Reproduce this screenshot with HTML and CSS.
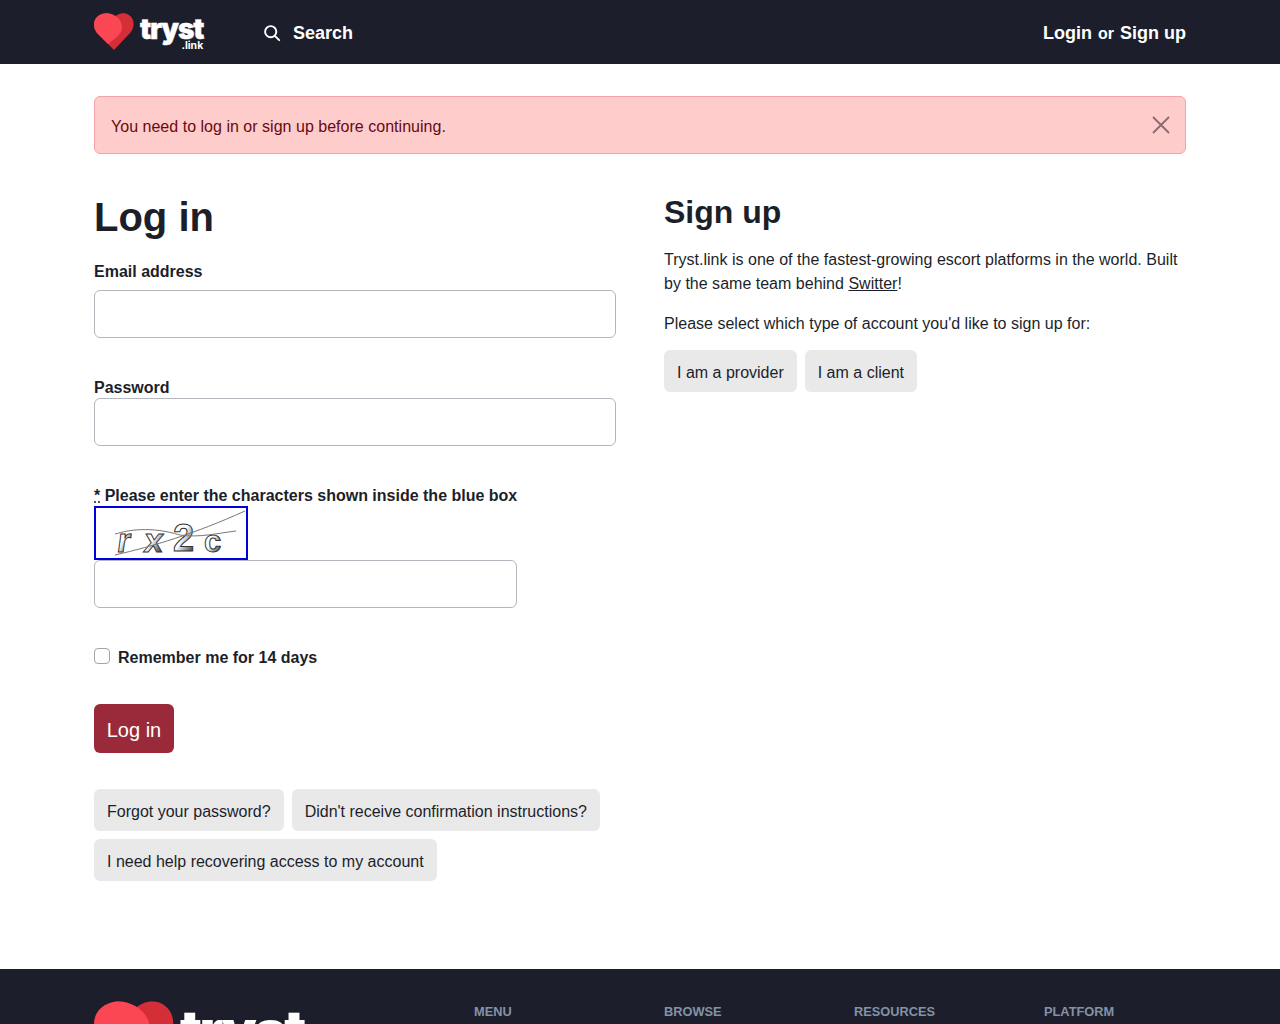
FILE: index.html
```html
<!DOCTYPE html>
<html lang="en">
<head>
<meta charset="utf-8">
<title>Log in - Tryst.link</title>
<link rel="stylesheet" href="styles.css">
</head>
<body>
<header class="topbar">
  <div class="wrap topbar-inner">
    <a class="logo" href="#">
      <svg class="logo-heart" viewBox="0 0 40 38" width="40" height="38" aria-hidden="true">
        <path fill="#d42f38" d="M20 37 L3 20 C-2 14 -1 4 8 1 C13 -1 18 1 20.500 4 C24 0 31 -1 35 2 C41 6 41 15 36 20 Z"/>
        <path fill="#fb4654" d="M14 31 L3 20 C-2 14 -1 4 8 1 C17 -2 28 5 28 14 C28 21 22 25 14 31 Z"/>
      </svg>
      <span class="logo-text">tryst<small>.link</small></span>
    </a>
    <a class="search" href="#">
      <svg viewBox="0 0 18 18" width="18" height="18" aria-hidden="true"><circle cx="7.700" cy="7.700" r="5.600" fill="none" stroke="#fff" stroke-width="1.900"/><path d="M11.800 11.800 L16.200 16.200" stroke="#fff" stroke-width="1.900" stroke-linecap="round"/></svg>
      <span>Search</span>
    </a>
    <div class="auth"><a href="#">Login</a> <span>or</span> <a href="#">Sign up</a></div>
  </div>
</header>

<main class="wrap">
  <div class="alert">
    <span>You need to log in or sign up before continuing.</span>
    <svg viewBox="0 0 18 18" width="18" height="18" aria-hidden="true"><path d="M1 1 L17 17 M17 1 L1 17" stroke="#8a6a6c" stroke-width="1.800"/></svg>
  </div>

  <div class="columns">
    <section class="login">
      <h1>Log in</h1>
      <label class="label first" for="email">Email address</label>
      <input class="field" id="email" type="text">
      <label class="label pw" for="password">Password</label>
      <input class="field" id="password" type="password">
      <label class="label pw" for="captcha"><abbr>*</abbr> Please enter the characters shown inside the blue box</label>
      <div class="captcha">
        <svg viewBox="0 0 154 54" width="154" height="54" aria-hidden="true">
          <defs>
            <linearGradient id="capfill" x1="0" y1="0" x2="1" y2="1">
              <stop offset="0.450" stop-color="#ffffff"/>
              <stop offset="0.950" stop-color="#222222"/>
            </linearGradient>
          </defs>
          <rect x="1" y="1" width="152" height="52" fill="#fff" stroke="#0000d8" stroke-width="2"/>
          <text class="cap" transform="translate(22 46) skewX(-8)">r</text>
          <text class="cap" transform="translate(49 46) skewX(-8)">x</text>
          <text class="cap big" transform="translate(79 45)">2</text>
          <text class="cap small" transform="translate(110 46)">c</text>
          <path d="M21 28 C35 24 56 20 86 29 C105 32 125 27 142 25 M21 49 C60 40 100 28 151 5" fill="none" stroke="#777" stroke-width="1"/>
        </svg>
      </div>
      <input class="field short" id="captcha" type="text">
      <label class="remember"><input type="checkbox"><span>Remember me for 14 days</span></label>
      <button class="submit" type="button">Log in</button>
      <div class="links">
        <a class="btn" href="#">Forgot your password?</a>
        <a class="btn" href="#">Didn't receive confirmation instructions?</a>
        <a class="btn" href="#">I need help recovering access to my account</a>
      </div>
    </section>

    <section class="signup">
      <h2>Sign up</h2>
      <p>Tryst.link is one of the fastest-growing escort platforms in the world. Built by the same team behind <a href="#">Switter</a>!</p>
      <p>Please select which type of account you'd like to sign up for:</p>
      <div class="choices">
        <a class="btn" href="#">I am a provider</a>
        <a class="btn" href="#">I am a client</a>
      </div>
    </section>
  </div>
</main>

<footer class="footer">
  <div class="wrap footer-inner">
    <div class="foot-logo">
      <svg viewBox="0 0 40 38" width="80" height="76" aria-hidden="true">
        <path fill="#d42f38" d="M20 37 L3 20 C-2 14 -1 4 8 1 C13 -1 18 1 20.500 4 C24 0 31 -1 35 2 C41 6 41 15 36 20 Z"/>
        <path fill="#fb4654" d="M14 31 L3 20 C-2 14 -1 4 8 1 C17 -2 28 5 28 14 C28 21 22 25 14 31 Z"/>
      </svg>
      <span>tryst</span>
    </div>
    <div class="foot-cols">
      <h6>MENU</h6><h6>BROWSE</h6><h6>RESOURCES</h6><h6>PLATFORM</h6>
    </div>
  </div>
</footer>
</body>
</html>
```

FILE: styles.css
```css
* { box-sizing: border-box; }
html, body { margin: 0; height: 1024px; overflow: hidden; }
body {
  display: flex;
  flex-direction: column;
  font-family: "Liberation Sans", Arial, sans-serif;
  font-size: 16px;
  line-height: 24px;
  color: #1c1f2a;
  background: #fff;
}
a { color: inherit; text-decoration: none; }
.wrap { width: 1092px; margin: 0 auto; }

.topbar { flex: none; height: 64px; background: #1c1f2b; color: #fff; }
.topbar-inner { display: flex; align-items: center; height: 64px; }
.logo { display: flex; align-items: flex-start; width: 169px; height: 64px; }
.logo-heart { margin-top: 13px; }
.logo-text {
  position: relative;
  margin: 9px 0 0 6px;
  font-family: Inter, sans-serif;
  font-weight: 900;
  font-size: 28px;
  line-height: 40px;
  letter-spacing: -1.200px;
  -webkit-text-stroke: 0.400px #fff;
}
.logo-text small {
  position: absolute;
  right: 0;
  top: 31px;
  font-size: 10.500px;
  line-height: 12px;
  font-weight: 700;
  letter-spacing: 0;
  -webkit-text-stroke: 0;
}
.search { display: flex; align-items: center; gap: 12px; padding-top: 2px; font-size: 18px; font-weight: 700; }
.auth { margin-left: auto; padding-top: 2px; font-size: 18px; font-weight: 700; }
.auth span { font-size: 16px; margin: 0 1px; }

.alert {
  display: flex;
  justify-content: space-between;
  align-items: center;
  height: 58px;
  margin-top: 32px;
  padding: 0 15px 0 16px;
  background: #ffcccc;
  border: 1px solid #f5a3a8;
  border-radius: 6px;
  color: #660a12;
}
.alert span { padding-top: 4px; letter-spacing: 0.020px; }
.columns { display: grid; grid-template-columns: 522px 522px; gap: 48px; margin-top: 39px; }

h1 { margin: 0; font-size: 40px; line-height: 48px; font-weight: 700; }
h2 { margin: 0 0 17px; font-size: 32px; line-height: 38px; font-weight: 700; }
.signup p { margin: 0 0 16px; letter-spacing: 0.012px; }
.signup p a { text-decoration: underline; }

.label { display: block; font-weight: 700; }
.label.first { margin-top: 19px; margin-bottom: 6px; }
.label.pw { margin-top: 38px; margin-bottom: -2px; }
.label abbr { text-decoration: underline dotted; }
.field {
  display: block;
  width: 100%;
  height: 48px;
  padding: 8px 12px;
  border: 1px solid #b4b6bd;
  border-radius: 6px;
  background: #fff;
  font: inherit;
}
.field.short { width: 423px; }
.captcha { position: relative; height: 54px; }
.captcha svg { display: block; }
.cap { font-family: "Liberation Sans", sans-serif; font-size: 34px; font-weight: 700; fill: url(#capfill); stroke: #333; stroke-width: 1; }
.cap.big { font-size: 38px; }
.cap.small { font-size: 31px; }

.remember { display: flex; align-items: center; gap: 8px; margin-top: 38px; font-weight: 700; }
.remember input {
  appearance: none;
  width: 16px;
  height: 16px;
  margin: 0 0 4px;
  border: 1px solid #a3a5ad;
  border-radius: 4px;
  background: #fff;
}
.submit {
  display: block;
  width: 80px;
  height: 49px;
  margin-top: 34px;
  padding: 2px 0 0;
  border: 0;
  border-radius: 6px;
  background: #9a2a3a;
  color: #fff;
  font: inherit;
  font-size: 20px;
}
.links { display: flex; flex-wrap: wrap; gap: 8px; margin-top: 36px; }
.btn {
  display: block;
  height: 42px;
  padding: 11px 13px 0;
  border-radius: 6px;
  background: #e9e9ea;
  color: #1c1f2a;
}
.choices { display: flex; gap: 8px; margin-top: -2px; }

.footer { flex: none; margin-top: auto; height: 55px; overflow: hidden; background: #1c1f2b; }
.footer-inner { display: flex; height: 55px; padding-top: 32px; }
.foot-logo { flex: none; display: flex; align-items: flex-start; width: 380px; color: #fff; }
.foot-logo span {
  margin: -6px 0 0 6px;
  font-family: Inter, sans-serif;
  font-weight: 900;
  font-size: 55px;
  line-height: 70px;
  letter-spacing: -2.400px;
}
.foot-cols { flex: none; display: grid; grid-template-columns: 190px 190px 190px 142px; padding-top: 1px; }
h6 { margin: 0; font-size: 12.800px; line-height: 20px; font-weight: 700; color: #8492a6; }
```
